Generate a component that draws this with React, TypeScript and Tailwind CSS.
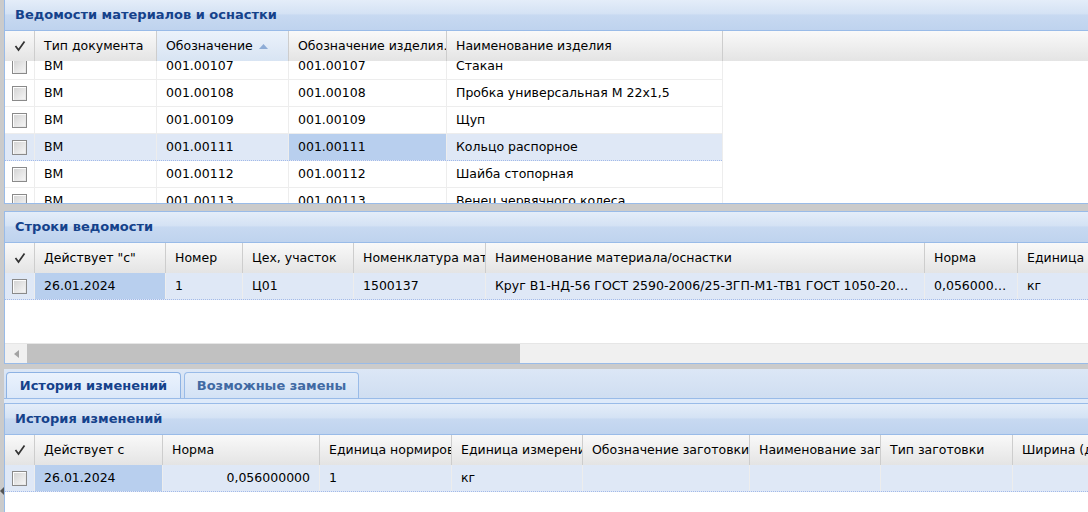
import React from "react";

const titleBar =
  "h-[31px] shrink-0 flex items-center px-[10px] border-b border-[#99bbe8] bg-[linear-gradient(to_bottom,#e4edf9_0%,#d4e2f4_46%,#c7d9f1_50%,#bfd3ee_100%)] text-[13px] font-bold text-[#15428b]";
const headRow =
  "h-[30px] shrink-0 flex bg-[linear-gradient(to_bottom,#f9f9f9,#e4e4e4)] text-black";
const headCell =
  "h-full shrink-0 flex items-center px-[9px] border-r border-[#cdcdcd] overflow-hidden whitespace-nowrap";
const bodyCell =
  "h-full shrink-0 flex items-center px-[9px] border-r border-[#ededed] overflow-hidden whitespace-nowrap";

function Checkbox() {
  return (
    <span className="block w-[15px] h-[15px] border border-[#8a8a8a] bg-[linear-gradient(135deg,#d2d2d2,#f7f7f7)] shadow-[inset_1px_1px_0_#fdfdfd,inset_-1px_-1px_0_#e8e8e8]" />
  );
}

function CheckHead() {
  return (
    <div className="w-[30px] h-full shrink-0 flex items-center justify-center border-r border-[#cdcdcd]">
      <svg width="12" height="12" viewBox="0 0 12 12">
        <path d="M1.5 6 L4.5 10 L10.5 1.5" fill="none" stroke="#333" strokeWidth="1.7" />
      </svg>
    </div>
  );
}

function CheckCell() {
  return (
    <div className="w-[30px] h-full shrink-0 flex items-center justify-center border-r border-[#ededed]">
      <Checkbox />
    </div>
  );
}

const docs = [
  ["001.00107", "Стакан"],
  ["001.00108", "Пробка универсальная М 22x1,5"],
  ["001.00109", "Щуп"],
  ["001.00111", "Кольцо распорное"],
  ["001.00112", "Шайба стопорная"],
  ["001.00113", "Венец червячного колеса"],
];

function DocsPanel() {
  return (
    <div className="h-[204px] shrink-0 flex flex-col bg-white border-l border-b border-[#99bbe8]">
      <div className={titleBar}>Ведомости материалов и оснастки</div>
      <div className={headRow}>
        <CheckHead />
        <div className={`${headCell} w-[122px]`}>Тип документа</div>
        <div className={`${headCell} w-[132px] bg-[linear-gradient(to_bottom,#ebf2fb,#d8e4f3)]`}>
          Обозначение
          <svg width="9" height="5" viewBox="0 0 9 5" className="ml-[6px]">
            <path d="M0 5 L4.5 0 L9 5 Z" fill="#8eacd6" />
          </svg>
        </div>
        <div className={`${headCell} w-[158px]`}>Обозначение изделия.</div>
        <div className={`${headCell} w-[276px]`}>Наименование изделия</div>
        <div className="flex-1" />
      </div>
      <div className="flex-1 overflow-hidden">
        <div className="-mt-[8px] w-[718px] border-r border-[#ededed]">
          {docs.map(([code, name], i) => {
            const sel = i === 3;
            return (
              <div
                key={code}
                className={
                  sel
                    ? "flex h-[27px] bg-[#dfe8f6] border-b border-dotted border-[#a3bae9]"
                    : "flex h-[27px] border-b border-[#ededed]"
                }
              >
                <CheckCell />
                <div className={`${bodyCell} w-[122px]`}>ВМ</div>
                <div className={`${bodyCell} w-[132px]`}>{code}</div>
                <div className={`${bodyCell} w-[158px] ${sel ? "bg-[#b8cfee]" : ""}`}>{code}</div>
                <div className={`${bodyCell} w-[275px] border-r-0`}>{name}</div>
              </div>
            );
          })}
        </div>
      </div>
    </div>
  );
}

function LinesPanel() {
  return (
    <div className="h-[153px] shrink-0 flex flex-col bg-white border-l border-t border-b border-[#99bbe8]">
      <div className={titleBar}>Строки ведомости</div>
      <div className={headRow}>
        <CheckHead />
        <div className={`${headCell} w-[131px]`}>Действует "с"</div>
        <div className={`${headCell} w-[77px]`}>Номер</div>
        <div className={`${headCell} w-[111px]`}>Цех, участок</div>
        <div className={`${headCell} w-[132px]`}>Номенклатура материала</div>
        <div className={`${headCell} w-[439px]`}>Наименование материала/оснастки</div>
        <div className={`${headCell} w-[93px]`}>Норма</div>
        <div className={`${headCell} w-[120px]`}>Единица измерения</div>
      </div>
      <div className="flex h-[27px] shrink-0 bg-[#dfe8f6] border-b border-dotted border-[#a3bae9]">
        <CheckCell />
        <div className={`${bodyCell} w-[131px] bg-[#b8cfee]`}>26.01.2024</div>
        <div className={`${bodyCell} w-[77px]`}>1</div>
        <div className={`${bodyCell} w-[111px]`}>Ц01</div>
        <div className={`${bodyCell} w-[132px]`}>1500137</div>
        <div className={`${bodyCell} w-[439px] pr-[14px]`}>
          <span className="overflow-hidden text-ellipsis">
            Круг В1-НД-56 ГОСТ 2590-2006/25-3ГП-М1-ТВ1 ГОСТ 1050-2013
          </span>
        </div>
        <div className={`${bodyCell} w-[93px] pr-[4px]`}>
          <span className="overflow-hidden text-ellipsis">0,056000000</span>
        </div>
        <div className={`${bodyCell} w-[120px]`}>кг</div>
      </div>
      <div className="flex-1" />
      <div className="h-[20px] shrink-0 flex bg-[#f0f0f0] border-t border-[#e6e6e6]">
        <div className="w-[22px] flex items-center justify-center">
          <svg width="5" height="8" viewBox="0 0 5 8">
            <path d="M5 0 L0 4 L5 8 Z" fill="#a3a3a3" />
          </svg>
        </div>
        <div className="w-[493px] bg-[#c1c1c1]" />
      </div>
    </div>
  );
}

function HistoryPanel() {
  return (
    <div className="flex-1 flex flex-col bg-white border-l border-t border-[#99bbe8]">
      <div className={titleBar}>История изменений</div>
      <div className={headRow}>
        <CheckHead />
        <div className={`${headCell} w-[128px] px-[7px]`}>Действует с</div>
        <div className={`${headCell} w-[157px]`}>Норма</div>
        <div className={`${headCell} w-[132px]`}>Единица нормирования</div>
        <div className={`${headCell} w-[131px] px-[7px]`}>Единица измерения</div>
        <div className={`${headCell} w-[167px] px-[7px]`}>Обозначение заготовки</div>
        <div className={`${headCell} w-[131px] px-[7px]`}>Наименование заготовки</div>
        <div className={`${headCell} w-[132px]`}>Тип заготовки</div>
        <div className={`${headCell} w-[120px]`}>Ширина (длина)</div>
      </div>
      <div className="flex h-[27px] shrink-0 bg-[#dfe8f6] border-b border-dotted border-[#a3bae9]">
        <CheckCell />
        <div className={`${bodyCell} w-[128px] px-[7px] bg-[#b8cfee]`}>26.01.2024</div>
        <div className={`${bodyCell} w-[157px] justify-end`}>0,056000000</div>
        <div className={`${bodyCell} w-[132px]`}>1</div>
        <div className={`${bodyCell} w-[131px] px-[7px]`}>кг</div>
        <div className={`${bodyCell} w-[167px]`} />
        <div className={`${bodyCell} w-[131px]`} />
        <div className={`${bodyCell} w-[132px]`} />
        <div className={`${bodyCell} w-[120px]`} />
      </div>
    </div>
  );
}

function Tabs() {
  return (
    <div className="h-[34px] shrink-0 flex flex-col bg-[linear-gradient(to_bottom,#dce7f6,#cddcf0)]">
      <div className="h-[29px] flex items-end gap-[3px] pl-[2px]">
        <div className="w-[175px] h-[26px] flex items-center justify-center rounded-t-[4px] border border-b-0 border-[#8db2e3] bg-[linear-gradient(to_bottom,#eaf2fd,#dbe8f9)] text-[13px] font-bold text-[#15428b]">
          История изменений
        </div>
        <div className="w-[175px] h-[26px] flex items-center justify-center rounded-t-[4px] border border-b-0 border-[#99bbe8] bg-[linear-gradient(to_bottom,#e2ecf9,#d3e2f5)] text-[13px] font-bold text-[#416aa3]">
          Возможные замены
        </div>
      </div>
      <div className="h-[5px] bg-[#deeafa] border-t border-[#99bbe8]" />
    </div>
  );
}

export default function App() {
  return (
    <div className="relative w-[1088px] h-[512px] overflow-hidden bg-[#cbcbcb] pl-[4px] flex flex-col font-['DejaVu_Sans',sans-serif] text-[12.5px] text-black">
      <DocsPanel />
      <div className="h-[7px] shrink-0" />
      <LinesPanel />
      <div className="h-[5px] shrink-0" />
      <Tabs />
      <HistoryPanel />
      <svg width="4" height="8" viewBox="0 0 4 8" className="absolute left-0 top-[487px]">
        <path d="M4 0 L0 4 L4 8 Z" fill="#555" />
      </svg>
    </div>
  );
}
